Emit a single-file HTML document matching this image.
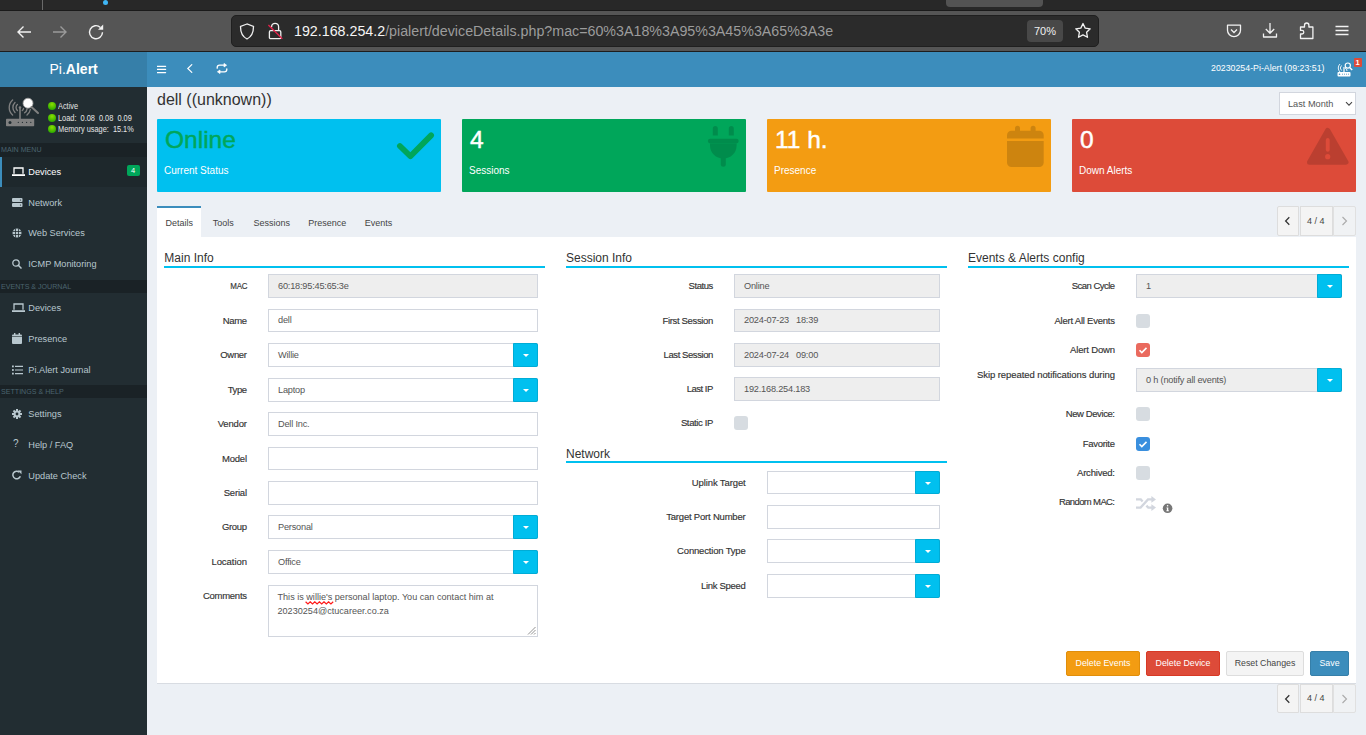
<!DOCTYPE html>
<html><head><meta charset="utf-8">
<style>
*{box-sizing:border-box;margin:0;padding:0}
html,body{width:1366px;height:735px;overflow:hidden}
body{position:relative;font-family:"Liberation Sans",sans-serif;background:#ecf0f5;color:#333}
.a{position:absolute}
.t{position:absolute;white-space:nowrap;line-height:1}
/* browser chrome */
#tabs{left:0;top:0;width:1366px;height:10px;background:#282828}
#tbline{left:0;top:10px;width:1366px;height:1px;background:#1a1a1a}
#toolbar{left:0;top:11px;width:1366px;height:40px;background:#555555}
#tbline2{left:0;top:51px;width:1366px;height:1px;background:#1d1d1d}
#url{left:231px;top:15px;width:868px;height:32px;background:#2b2b2b;border:1px solid #1f1f1f;border-radius:5px}
/* header */
#logo{left:0;top:52px;width:147px;height:35px;background:#367fa9}
#navbar{left:147px;top:52px;width:1219px;height:35px;background:#3c8dbc}
/* sidebar */
#sidebar{left:0;top:87px;width:147px;height:648px;background:#222d32}
.shdr{position:absolute;left:0;width:147px;background:#1a2226;color:#4b646f;font-size:7.6px;line-height:1}
.sitem{position:absolute;left:0;width:147px;color:#b8c7ce;font-size:9.4px}
/* info boxes */
.ibox{position:absolute;top:119px;width:284px;height:73px;border-radius:1px;color:#fff}
.ibox .num{position:absolute;left:8px;top:9.4px;font-size:24.5px;-webkit-text-stroke:0.45px currentColor;line-height:1;white-space:nowrap}
.ibox .lbl{position:absolute;left:7px;top:46.7px;font-size:10px;line-height:1;white-space:nowrap}
/* forms */
.lab{position:absolute;font-size:9.5px;letter-spacing:-0.25px;-webkit-text-stroke:0.15px #333;line-height:1;color:#333;text-align:right;white-space:nowrap}
.inp{position:absolute;height:24px;border:1px solid #d2d6de;background:#fff;color:#555;font-size:9.2px;letter-spacing:-0.2px;line-height:22px;padding-left:9px;white-space:nowrap}
.inp.ro{background:#eeeeee}
.dd{position:absolute;width:25px;height:24px;background:#00c0ef;border:1px solid #00acd6;border-radius:0 2px 2px 0}
.dd:after{content:"";position:absolute;left:8.7px;top:9.5px;border-left:3.3px solid transparent;border-right:3.3px solid transparent;border-top:3.6px solid #fff}
.sec{position:absolute;font-size:12px;line-height:1;color:#333;white-space:nowrap}
.secline{position:absolute;height:2px;background:#00c0ef}
.cb{position:absolute;width:14px;height:14px;border-radius:3px;background:#d7dce1}
.btn{position:absolute;top:651px;height:25px;border-radius:2px;font-size:8.8px;line-height:23px;text-align:center;color:#fff;white-space:nowrap}
</style></head><body>
<!-- browser chrome -->
<div id="tabs" class="a"></div>
<div id="tbline" class="a"></div>
<div id="toolbar" class="a"></div>
<div id="tbline2" class="a"></div>
<div id="url" class="a"></div>
<div class="a" style="left:42px;top:0;width:1px;height:10px;background:#6a6a6a"></div>
<div class="a" style="left:103px;top:0;width:5px;height:5px;border-radius:50%;background:#3fb6f5"></div>
<div class="a" style="left:946px;top:-4px;width:97px;height:11px;border-radius:4px;background:#535353"></div>
<!-- back -->
<svg class="a" style="left:16px;top:24px" width="16" height="16" viewBox="0 0 16 16"><path d="M15 8H2M7.5 2.5L2 8l5.5 5.5" fill="none" stroke="#f2f2f2" stroke-width="1.4"/></svg>
<svg class="a" style="left:52px;top:24px" width="16" height="16" viewBox="0 0 16 16"><path d="M1 8h13M8.5 2.5L14 8l-5.5 5.5" fill="none" stroke="#9a9a9a" stroke-width="1.4"/></svg>
<svg class="a" style="left:88px;top:24px" width="17" height="17" viewBox="0 0 17 17"><path d="M12.4 3.4A6.5 6.5 0 1 0 14.5 8.3" fill="none" stroke="#f2f2f2" stroke-width="1.4"/><path d="M10 5.8H15.2V0.6z" fill="#f2f2f2"/></svg>
<!-- shield -->
<svg class="a" style="left:239px;top:23px" width="16" height="17" viewBox="0 0 16 17"><path d="M8 1L1.5 3.5C1.5 10 4 14 8 16 12 14 14.5 10 14.5 3.5z" fill="none" stroke="#f0f0f0" stroke-width="1.3"/></svg>
<!-- lock -->
<svg class="a" style="left:267px;top:22px" width="16" height="18" viewBox="0 0 16 18"><rect x="2.4" y="8.6" width="11.4" height="8.1" rx="1.3" fill="none" stroke="#f0f0f0" stroke-width="1.3"/><path d="M4.6 5.2V4.8A3.5 3.5 0 0 1 11.6 4.8V8.6" fill="none" stroke="#f0f0f0" stroke-width="1.3"/><path d="M1.4 3L15.3 16.8" stroke="#e2224a" stroke-width="1.4"/></svg>
<div class="t" style="left:294px;top:23.9px;font-size:14.25px;color:#9c9c9c"><span style="color:#f5f5f5">192.168.254.2</span>/pialert/deviceDetails.php?mac=60%3A18%3A95%3A45%3A65%3A3e</div>
<div class="a" style="left:1027px;top:20px;width:36px;height:22px;border-radius:4px;background:#484848"></div>
<div class="t" style="left:1034px;top:25.6px;font-size:11px;color:#f0f0f0">70%</div>
<svg class="a" style="left:1074px;top:22px" width="18" height="18" viewBox="0 0 18 18"><path d="M9 1.5l2.2 4.6 5 .7-3.6 3.5.9 5L9 12.9l-4.5 2.4.9-5L1.8 6.8l5-.7z" fill="none" stroke="#f2f2f2" stroke-width="1.3" stroke-linejoin="round"/></svg>
<!-- pocket -->
<svg class="a" style="left:1226px;top:24px" width="16" height="14" viewBox="0 0 16 14"><path d="M1.5 1.2h13v5a6.5 6.5 0 0 1-13 0z" fill="none" stroke="#f2f2f2" stroke-width="1.3" stroke-linejoin="round"/><path d="M5 5.5l3 3 3-3" fill="none" stroke="#f2f2f2" stroke-width="1.3"/></svg>
<!-- download -->
<svg class="a" style="left:1262px;top:22px" width="16" height="17" viewBox="0 0 16 17"><path d="M8 1v10M3.8 7L8 11.2 12.2 7M1.5 11.5v3.5h13v-3.5" fill="none" stroke="#f2f2f2" stroke-width="1.3" stroke-linejoin="round"/></svg>
<!-- extensions -->
<svg class="a" style="left:1299px;top:22px" width="16" height="18" viewBox="0 0 16 18"><path d="M1.5 16.5V12h1.5a1.8 1.8 0 0 0 0-3.6H1.5V5h4V3.2a2.2 2.2 0 0 1 4.4 0V5h4v11.5z" fill="none" stroke="#f2f2f2" stroke-width="1.3" stroke-linejoin="round"/></svg>
<!-- menu -->
<svg class="a" style="left:1335px;top:24px" width="14" height="13" viewBox="0 0 14 13"><path d="M0.5 2.5h13M0.5 6.5h13M0.5 10.5h13" stroke="#f2f2f2" stroke-width="1.3"/></svg>


<!-- header -->
<div id="logo" class="a"></div>
<div id="navbar" class="a"></div>
<div class="t" style="left:49.5px;top:62.2px;font-size:14px;color:#fff"><span>Pi.</span><b>Alert</b></div>
<svg class="a" style="left:157px;top:65px" width="10" height="9" viewBox="0 0 10 9"><path d="M0 1.3h8.6M0 4.4h8.6M0 7.5h8.6" stroke="#fff" stroke-width="1.25" stroke-linecap="round"/></svg>
<svg class="a" style="left:186px;top:63px" width="8" height="11" viewBox="0 0 8 11"><path d="M5.8 1.6L1.8 5.5 5.8 9.4" fill="none" stroke="#fff" stroke-width="1.2" stroke-linecap="round"/></svg>
<svg class="a" style="left:216px;top:63px" width="12" height="11" viewBox="0 0 12 11"><g fill="none" stroke="#fff" stroke-width="1.3" stroke-linecap="round"><path d="M1.2 5.2V4.6Q1.2 2.2 3.6 2.2H8.4"/><path d="M10.8 5.8V6.4Q10.8 8.8 8.4 8.8H3.6"/></g><g fill="#fff" stroke="#fff" stroke-width="0.7" stroke-linejoin="round"><path d="M8 0.4L10.6 2.2 8 4z"/><path d="M4 7L1.4 8.8 4 10.6z"/></g></svg>
<div class="t" style="left:1211px;top:64px;font-size:8.8px;color:#fff">20230254-Pi-Alert (09:23:51)</div>
<svg class="a" style="left:1337px;top:62px" width="16" height="15" viewBox="0 0 16 15"><rect x="0.5" y="10" width="13" height="4.5" rx="1" fill="#fff"/><circle cx="2.5" cy="12.2" r="0.8" fill="#3c8dbc"/><path d="M5 12.2h7" stroke="#3c8dbc" stroke-width="0.8" stroke-dasharray="1 1"/><path d="M7 10V5" stroke="#fff" stroke-width="1.2"/><path d="M4.5 3.5a3.5 3.5 0 0 0 0 5M3 2a5.5 5.5 0 0 0 0 8" fill="none" stroke="#fff" stroke-width="0.9"/><circle cx="10.8" cy="3.6" r="2.6" fill="none" stroke="#fff" stroke-width="1.2"/><path d="M12.6 5.4l2.6 2.6" stroke="#fff" stroke-width="1.4"/><path d="M8 6a3 3 0 0 1 2 3M9.2 5.3" fill="none" stroke="#fff" stroke-width="0.9"/></svg>
<div class="a" style="left:1354px;top:58px;width:8px;height:9px;background:#dd4b39;border-radius:1px"></div>
<div class="t" style="left:1355.5px;top:59.2px;font-size:7.5px;font-weight:bold;color:#fff">1</div>


<!-- sidebar -->
<div id="sidebar" class="a"></div>
<svg class="a" style="left:5px;top:97px" width="36" height="31" viewBox="0 0 36 31"><g fill="#808080" stroke="none"><rect x="1" y="21.8" width="28.2" height="7.5" rx="0.8"/></g><g fill="#222d32"><circle cx="5" cy="25.4" r="1.5"/><circle cx="13.3" cy="25.4" r="0.6"/><circle cx="17.4" cy="25.4" r="0.6"/><circle cx="21.6" cy="25.4" r="0.6"/><circle cx="25.8" cy="25.4" r="0.6"/></g><path d="M15 22V10.5" stroke="#808080" stroke-width="1.6"/><circle cx="15" cy="10.5" r="1.3" fill="#808080"/><g fill="none" stroke="#808080" stroke-width="1.35" stroke-linecap="round"><path d="M12.4 7.5a4 4 0 0 0 0 6"/><path d="M10 5.5a7 7 0 0 0 0 10"/><path d="M7.6 3a10 10 0 0 0 0 15"/><path d="M17.3 13.5a3 3 0 0 0 1.2-2"/><path d="M19.6 15.8a6 6 0 0 0 2.5-4"/><path d="M22 18a9 9 0 0 0 3.3-5.5"/></g><circle cx="23" cy="6.2" r="5" fill="#fff" stroke="#999" stroke-width="0.8"/><path d="M26.5 10l6.5 6" stroke="#808080" stroke-width="2" stroke-linecap="round"/></svg>
<div class="a" style="left:48px;top:102px;width:8px;height:8px;border-radius:50%;background:radial-gradient(circle at 50% 30%,#8be000,#2aa800 80%)"></div>
<div class="a" style="left:48px;top:114px;width:8px;height:8px;border-radius:50%;background:radial-gradient(circle at 50% 30%,#8be000,#2aa800 80%)"></div>
<div class="a" style="left:48px;top:125px;width:8px;height:8px;border-radius:50%;background:radial-gradient(circle at 50% 30%,#8be000,#2aa800 80%)"></div>
<div class="t" style="left:58px;top:103.3px;font-size:8.2px;color:#e6e6e6;transform:scaleX(0.9);transform-origin:0 0">Active</div>
<div class="t" style="left:58px;top:115.0px;font-size:8.2px;color:#e6e6e6;transform:scaleX(0.9);transform-origin:0 0">Load:&nbsp; 0.08&nbsp; 0.08&nbsp; 0.09</div>
<div class="t" style="left:58px;top:126.1px;font-size:8.2px;color:#e6e6e6;transform:scaleX(0.9);transform-origin:0 0">Memory usage:&nbsp; 15.1%</div>
<div class="a" style="left:0;top:143px;width:147px;height:14px;background:#1a2226"></div>
<div class="t" style="left:1px;top:147px;font-size:7.1px;color:#4b646f">MAIN MENU</div>
<div class="a" style="left:0;top:280px;width:147px;height:13px;background:#1a2226"></div>
<div class="t" style="left:1px;top:283.5px;font-size:7.1px;color:#4b646f">EVENTS &amp; JOURNAL</div>
<div class="a" style="left:0;top:385px;width:147px;height:13px;background:#1a2226"></div>
<div class="t" style="left:1px;top:388.5px;font-size:7.1px;color:#4b646f">SETTINGS &amp; HELP</div>
<div class="a" style="left:0;top:157px;width:147px;height:30px;background:#1e282c"></div>
<div class="a" style="left:0;top:157px;width:2px;height:30px;background:#3c8dbc"></div>
<div class="a" style="left:127px;top:165px;width:13px;height:11px;border-radius:2px;background:#00a65a"></div>
<div class="t" style="left:131px;top:167px;font-size:7.5px;color:#fff">4</div>
<svg class="a" style="left:12px;top:167px" width="13" height="9" viewBox="0 0 13 9"><path d="M2 6.8V1h9v5.8" fill="none" stroke="#fff" stroke-width="1.3"/><path d="M0 7.2h13v1.8H0z" fill="#fff"/></svg>
<div class="t" style="left:28.3px;top:168.0px;font-size:9.2px;color:#fff">Devices</div>
<svg class="a" style="left:12px;top:198px" width="11" height="9" viewBox="0 0 11 9"><rect x="0" y="0" width="10.5" height="4" rx="1" fill="#b8c7ce"/><rect x="0" y="5" width="10.5" height="4" rx="1" fill="#b8c7ce"/><circle cx="8.5" cy="2" r="0.6" fill="#222d32"/><circle cx="8.5" cy="7" r="0.6" fill="#222d32"/></svg>
<div class="t" style="left:28.3px;top:199.0px;font-size:9.2px;color:#b8c7ce">Network</div>
<svg class="a" style="left:12px;top:227.5px" width="10" height="10" viewBox="0 0 10 10"><circle cx="5" cy="5" r="4.5" fill="#b8c7ce"/><path d="M0.5 3.5h9M0.5 6.5h9M3.5 0.5v9M6.5 0.5v9" stroke="#222d32" stroke-width="0.8"/></svg>
<div class="t" style="left:28.3px;top:229.2px;font-size:9.2px;color:#b8c7ce">Web Services</div>
<svg class="a" style="left:12px;top:258.5px" width="10" height="10" viewBox="0 0 10 10"><circle cx="4" cy="4" r="3.2" fill="none" stroke="#b8c7ce" stroke-width="1.3"/><path d="M6.3 6.3L9.5 9.5" stroke="#b8c7ce" stroke-width="1.5"/></svg>
<div class="t" style="left:28.3px;top:260.2px;font-size:9.2px;color:#b8c7ce">ICMP Monitoring</div>
<svg class="a" style="left:12px;top:303px" width="13" height="9" viewBox="0 0 13 9"><path d="M2 6.8V1h9v5.8" fill="none" stroke="#b8c7ce" stroke-width="1.3"/><path d="M0 7.2h13v1.8H0z" fill="#b8c7ce"/></svg>
<div class="t" style="left:28.3px;top:304.2px;font-size:9.2px;color:#b8c7ce">Devices</div>
<svg class="a" style="left:12px;top:333px" width="10" height="11" viewBox="0 0 10 11"><rect x="2" y="0" width="1.4" height="2.5" fill="#b8c7ce"/><rect x="6.6" y="0" width="1.4" height="2.5" fill="#b8c7ce"/><rect x="0" y="1.5" width="10" height="9.5" rx="1" fill="#b8c7ce"/><rect x="0" y="3.2" width="10" height="0.6" fill="#222d32"/></svg>
<div class="t" style="left:28.3px;top:335.4px;font-size:9.2px;color:#b8c7ce">Presence</div>
<svg class="a" style="left:12px;top:364.5px" width="11" height="10" viewBox="0 0 11 10"><rect x="0" y="0.5" width="1.8" height="1.8" fill="#b8c7ce"/><rect x="0" y="4.1" width="1.8" height="1.8" fill="#b8c7ce"/><rect x="0" y="7.7" width="1.8" height="1.8" fill="#b8c7ce"/><path d="M3 1.4h8M3 5h8M3 8.6h8" stroke="#b8c7ce" stroke-width="1.1"/></svg>
<div class="t" style="left:28.3px;top:366.2px;font-size:9.2px;color:#b8c7ce">Pi.Alert Journal</div>
<svg class="a" style="left:12px;top:408.5px" width="10" height="10" viewBox="0 0 10 10"><g fill="#b8c7ce"><circle cx="5" cy="5" r="3.4"/><rect x="4" y="0" width="2" height="10"/><rect x="0" y="4" width="10" height="2"/><rect x="4" y="0" width="2" height="10" transform="rotate(45 5 5)"/><rect x="4" y="0" width="2" height="10" transform="rotate(-45 5 5)"/></g><circle cx="5" cy="5" r="1.4" fill="#222d32"/></svg>
<div class="t" style="left:28.3px;top:410.2px;font-size:9.2px;color:#b8c7ce">Settings</div>
<div class="t" style="left:13px;top:439px;font-size:10px;color:#b8c7ce">?</div>
<div class="t" style="left:28.3px;top:440.5px;font-size:9.2px;color:#b8c7ce">Help / FAQ</div>
<svg class="a" style="left:12px;top:469.5px" width="10" height="10" viewBox="0 0 10 10"><path d="M8.3 6.2A3.8 3.8 0 1 1 7.3 2.2" fill="none" stroke="#b8c7ce" stroke-width="1.5"/><path d="M5.8 0.5H9.5V4.2z" fill="#b8c7ce"/></svg>
<div class="t" style="left:28.3px;top:471.6px;font-size:9.2px;color:#b8c7ce">Update Check</div>

<!-- content -->
<div class="a" style="left:157px;top:206px;width:44px;height:31px;background:#fff"></div>
<div class="a" style="left:157px;top:206px;width:44px;height:2px;background:#3c8dbc"></div>
<div class="t" style="left:165.5px;top:218.6px;font-size:9px;color:#444">Details</div>
<div class="t" style="left:212.8px;top:218.6px;font-size:9px;color:#444">Tools</div>
<div class="t" style="left:253.5px;top:218.6px;font-size:9px;color:#444">Sessions</div>
<div class="t" style="left:308.2px;top:218.6px;font-size:9px;color:#444">Presence</div>
<div class="t" style="left:364.8px;top:218.6px;font-size:9px;color:#444">Events</div>
<div class="a" style="left:1277px;top:206px;width:22px;height:30px;background:#f4f4f4;border:1px solid #ddd;border-radius:2px 0 0 2px"></div>
<div class="a" style="left:1300px;top:206px;width:33px;height:30px;background:#f4f4f4;border:1px solid #ddd"></div>
<div class="a" style="left:1333px;top:206px;width:23px;height:30px;background:#f0f2f4;border:1px solid #e0e0e0;border-radius:0 2px 2px 0"></div>
<svg class="a" style="left:1284px;top:216.0px" width="7" height="10" viewBox="0 0 7 10"><path d="M5.3 1.2L1.6 5l3.7 3.8" fill="none" stroke="#333" stroke-width="1.25"/></svg>
<svg class="a" style="left:1341px;top:216.0px" width="7" height="10" viewBox="0 0 7 10"><path d="M1.5 1l4 4-4 4" fill="none" stroke="#aaa" stroke-width="1.1"/></svg>
<div class="t" style="left:1307px;top:216.9px;font-size:9px;color:#444">4 / 4</div>
<div class="a" style="left:157px;top:237px;width:1199px;height:447px;background:#fff;border-bottom:1px solid #d8dce2"></div>
<div class="a" style="left:1277px;top:684px;width:22px;height:29px;background:#f4f4f4;border:1px solid #ddd;border-radius:2px 0 0 2px"></div>
<div class="a" style="left:1300px;top:684px;width:33px;height:29px;background:#f4f4f4;border:1px solid #ddd"></div>
<div class="a" style="left:1333px;top:684px;width:23px;height:29px;background:#f0f2f4;border:1px solid #e0e0e0;border-radius:0 2px 2px 0"></div>
<svg class="a" style="left:1284px;top:693.5px" width="7" height="10" viewBox="0 0 7 10"><path d="M5.3 1.2L1.6 5l3.7 3.8" fill="none" stroke="#333" stroke-width="1.25"/></svg>
<svg class="a" style="left:1341px;top:693.5px" width="7" height="10" viewBox="0 0 7 10"><path d="M1.5 1l4 4-4 4" fill="none" stroke="#aaa" stroke-width="1.1"/></svg>
<div class="t" style="left:1307px;top:694.4px;font-size:9px;color:#444">4 / 4</div>
<div class="t" style="left:157px;top:91.5px;font-size:16px;color:#333">dell ((unknown))</div>
<div class="a" style="left:1279px;top:92px;width:77px;height:23px;background:#fff;border:1px solid #d2d6de"></div>
<div class="t" style="left:1288px;top:100.2px;font-size:9.2px;color:#555">Last Month</div>
<svg class="a" style="left:1344.5px;top:101px" width="8" height="6" viewBox="0 0 8 6"><path d="M1 1.2l3 3 3-3" fill="none" stroke="#444" stroke-width="1.05"/></svg>
<div class="ibox" style="left:157px;background:#00c0ef"><div class="num" style="color:#00a65a">Online</div><div class="lbl">Current Status</div></div>
<div class="ibox" style="left:462px;background:#00a65a"><div class="num" style="color:#fff">4</div><div class="lbl">Sessions</div></div>
<div class="ibox" style="left:767px;background:#f39c12"><div class="num" style="color:#fff">11 h.</div><div class="lbl">Presence</div></div>
<div class="ibox" style="left:1072px;background:#dd4b39"><div class="num" style="color:#fff">0</div><div class="lbl">Down Alerts</div></div>
<svg class="a" style="left:395px;top:128px" width="42" height="36" viewBox="0 0 42 36"><path d="M4.9 18L15.4 28.3 36.1 7.4" fill="none" stroke="#00a65a" stroke-width="5.8" stroke-linecap="round" stroke-linejoin="round"/></svg>
<svg class="a" style="left:706px;top:125px" width="34" height="43" viewBox="0 0 34 43"><g fill="#000" opacity="0.15"><path d="M6.8 10.4V3.4a2.5 2.5 0 0 1 5 0V10.4zM22.8 10.4V3.4a2.5 2.5 0 0 1 5 0V10.4z"/><path d="M4.2 13.8H30.4a2.3 2.3 0 0 1 0 4.6H4.2a2.3 2.3 0 0 1 0-4.6z"/><path d="M4 18.4H30.6V20.5C30.6 28 24.6 33.6 17.3 33.6C10 33.6 4 28 4 20.5Z"/><path d="M14.8 33V39.3a2.5 2.5 0 0 0 5 0V33z"/></g></svg>
<svg class="a" style="left:1007px;top:125px" width="37" height="43" viewBox="0 0 37 43"><g fill="#000" opacity="0.15"><path d="M8 8V3.2a2.5 2.5 0 0 1 5 0V8zM23.6 8V3.2a2.5 2.5 0 0 1 5 0V8z"/><path d="M4.5 5.8H32.2a4.5 4.5 0 0 1 4.5 4.5V13.6H0V10.3A4.5 4.5 0 0 1 4.5 5.8z"/><path d="M0 16.1H36.7V37.5a4.5 4.5 0 0 1-4.5 4.5H4.5A4.5 4.5 0 0 1 0 37.5z"/></g></svg>
<svg class="a" style="left:1306px;top:127px" width="44" height="40" viewBox="0 0 44 40"><g opacity="0.15"><path d="M21.7 3.3L40 35.2H3.5z" fill="#000" stroke="#000" stroke-width="5" stroke-linejoin="round"/></g><g fill="#dd4b39"><rect x="19.8" y="11" width="3.9" height="13.7" rx="1.95"/><circle cx="21.7" cy="29.7" r="2.6"/></g></svg>
<div class="sec" style="left:164.3px;top:251.5px">Main Info</div>
<div class="secline" style="left:164.3px;top:266px;width:381px"></div>
<div class="sec" style="left:566px;top:251.5px">Session Info</div>
<div class="secline" style="left:566px;top:266px;width:381px"></div>
<div class="sec" style="left:968px;top:251.5px">Events &amp; Alerts config</div>
<div class="secline" style="left:968px;top:266px;width:381px"></div>
<div class="sec" style="left:566px;top:447.7px">Network</div>
<div class="secline" style="left:566px;top:461px;width:381px"></div>
<div class="lab" style="right:1119px;top:281.4px;transform:scaleX(0.84);transform-origin:100% 0">MAC</div>
<div class="inp ro" style="left:268px;top:274px;width:270px;height:24px;line-height:22px">60:18:95:45:65:3e</div>
<div class="lab" style="right:1119.35px;top:315.9px;letter-spacing:-0.347px">Name</div>
<div class="inp" style="left:268px;top:309px;width:270px;height:23px;line-height:21px">dell</div>
<div class="lab" style="right:1119.32px;top:350.4px;letter-spacing:-0.320px">Owner</div>
<div class="inp" style="left:268px;top:343px;width:270px;height:24px;line-height:22px">Willie</div>
<div class="dd" style="left:513px;top:343px;height:24px"></div>
<div class="lab" style="right:1119.47px;top:385.4px;letter-spacing:-0.465px">Type</div>
<div class="inp" style="left:268px;top:378px;width:270px;height:24px;line-height:22px">Laptop</div>
<div class="dd" style="left:513px;top:378px;height:24px"></div>
<div class="lab" style="right:1119.16px;top:419.4px;letter-spacing:-0.162px">Vendor</div>
<div class="inp" style="left:268px;top:412px;width:270px;height:24px;line-height:22px">Dell Inc.</div>
<div class="lab" style="right:1119.22px;top:453.9px;letter-spacing:-0.219px">Model</div>
<div class="inp" style="left:268px;top:447px;width:270px;height:23px;line-height:21px"></div>
<div class="lab" style="right:1119.20px;top:488.4px;letter-spacing:-0.198px">Serial</div>
<div class="inp" style="left:268px;top:481px;width:270px;height:24px;line-height:22px"></div>
<div class="lab" style="right:1119.35px;top:522.4px;letter-spacing:-0.351px">Group</div>
<div class="inp" style="left:268px;top:515px;width:270px;height:24px;line-height:22px">Personal</div>
<div class="dd" style="left:513px;top:515px;height:24px"></div>
<div class="lab" style="right:1119.05px;top:557.4px;letter-spacing:-0.045px">Location</div>
<div class="inp" style="left:268px;top:550px;width:270px;height:24px;line-height:22px">Office</div>
<div class="dd" style="left:513px;top:550px;height:24px"></div>
<div class="lab" style="right:1119.26px;top:591.4px;letter-spacing:-0.261px">Comments</div>
<div class="a" style="left:268px;top:585px;width:270px;height:52px;border:1px solid #d2d6de;background:#fff"></div>
<div class="t" style="left:277.5px;top:593.2px;font-size:9.1px;color:#555">This is willie's personal laptop. You can contact him at</div>
<svg class="a" style="left:305px;top:600.6px" width="29" height="4" viewBox="0 0 29 4"><path d="M0.6 0.8 L2.9 3.0 L5.2 0.8 L7.5 3.0 L9.8 0.8 L12.1 3.0 L14.4 0.8 L16.7 3.0 L19.0 0.8 L21.3 3.0 L23.6 0.8 L25.9 3.0 L28.2 0.8" fill="none" stroke="#ff1a1a" stroke-width="1.2"/></svg>
<div class="t" style="left:277.5px;top:607.2px;font-size:9.1px;color:#555">20230254@ctucareer.co.za</div>
<svg class="a" style="left:527px;top:626px" width="9" height="9" viewBox="0 0 9 9"><path d="M8.5 1L1 8.5M8.5 4L4 8.5M8.5 7L7 8.5" stroke="#777" stroke-width="0.8"/></svg>
<div class="lab" style="right:653.15px;top:281.4px;letter-spacing:-0.446px">Status</div>
<div class="inp ro" style="left:734px;top:274px;width:206px;height:24px;line-height:22px">Online</div>
<div class="lab" style="right:653.03px;top:315.9px;letter-spacing:-0.334px">First Session</div>
<div class="inp ro" style="left:734px;top:309px;width:206px;height:23px;line-height:21px">2024-07-23&nbsp;&nbsp; 18:39</div>
<div class="lab" style="right:653.13px;top:350.4px;letter-spacing:-0.427px">Last Session</div>
<div class="inp ro" style="left:734px;top:343px;width:206px;height:24px;line-height:22px">2024-07-24&nbsp;&nbsp; 09:00</div>
<div class="lab" style="right:653.20px;top:384.4px;letter-spacing:-0.495px">Last IP</div>
<div class="inp ro" style="left:734px;top:377px;width:206px;height:24px;line-height:22px">192.168.254.183</div>
<div class="lab" style="right:653.07px;top:418.4px;letter-spacing:-0.372px">Static IP</div>
<div class="cb" style="left:734px;top:416px"></div>
<div class="lab" style="right:620.41px;top:477.9px;letter-spacing:-0.114px">Uplink Target</div>
<div class="inp" style="left:767px;top:471px;width:173px;height:23px;line-height:21px"></div>
<div class="dd" style="left:915px;top:471px;height:23px"></div>
<div class="lab" style="right:620.50px;top:512.4px;letter-spacing:-0.200px">Target Port Number</div>
<div class="inp" style="left:767px;top:505px;width:173px;height:24px;line-height:22px"></div>
<div class="lab" style="right:620.48px;top:546.4px;letter-spacing:-0.180px">Connection Type</div>
<div class="inp" style="left:767px;top:539px;width:173px;height:24px;line-height:22px"></div>
<div class="dd" style="left:915px;top:539px;height:24px"></div>
<div class="lab" style="right:620.62px;top:581.4px;letter-spacing:-0.315px">Link Speed</div>
<div class="inp" style="left:767px;top:574px;width:173px;height:24px;line-height:22px"></div>
<div class="dd" style="left:915px;top:574px;height:24px"></div>
<div class="lab" style="right:251.54px;top:281.4px;letter-spacing:-0.539px">Scan Cycle</div>
<div class="inp ro" style="left:1136px;top:274px;width:206px;height:24px;line-height:22px">1</div>
<div class="dd" style="left:1317px;top:274px;height:24px"></div>
<div class="lab" style="right:251.23px;top:316.4px;letter-spacing:-0.226px">Alert All Events</div>
<div class="cb" style="left:1136px;top:314px"></div>
<div class="lab" style="right:251.17px;top:345.4px;letter-spacing:-0.173px">Alert Down</div>
<div class="cb" style="left:1136px;top:343px;background:#ea6a5e"></div>
<svg class="a" style="left:1136px;top:343px" width="14" height="14" viewBox="0 0 14 14"><path d="M3.5 7.3l2.3 2.3 4.7-4.7" fill="none" stroke="#fff" stroke-width="1.6"/></svg>
<div class="lab" style="right:251.08px;top:370.4px;letter-spacing:-0.075px">Skip repeated notifications during</div>
<div class="inp ro" style="left:1136px;top:368px;width:206px;height:24px;line-height:22px">0 h (notify all events)</div>
<div class="dd" style="left:1317px;top:368px;height:24px"></div>
<div class="lab" style="right:251.40px;top:409.4px;letter-spacing:-0.402px">New Device:</div>
<div class="cb" style="left:1136px;top:407px"></div>
<div class="lab" style="right:251.29px;top:439.4px;letter-spacing:-0.288px">Favorite</div>
<div class="cb" style="left:1136px;top:437px;background:#3a8fde"></div>
<svg class="a" style="left:1136px;top:437px" width="14" height="14" viewBox="0 0 14 14"><path d="M3.5 7.3l2.3 2.3 4.7-4.7" fill="none" stroke="#fff" stroke-width="1.6"/></svg>
<div class="lab" style="right:251.20px;top:468.4px;letter-spacing:-0.200px">Archived:</div>
<div class="cb" style="left:1136px;top:466px"></div>
<div class="lab" style="right:251.62px;top:497.4px;letter-spacing:-0.620px">Random MAC:</div>
<svg class="a" style="left:1136px;top:495px" width="21" height="17" viewBox="0 0 21 17"><g fill="none" stroke="#d2d6de" stroke-width="2.3"><path d="M0 4.4H4.8L6.6 6.4"/><path d="M0 12.6H4.6L12 4.4H16.2"/><path d="M10.4 10.6L12.3 12.6H16.2"/></g><g fill="#d2d6de"><path d="M15.4 1L20 4.4L15.4 7.8z"/><path d="M15.4 9.2L20 12.6L15.4 16z"/></g></svg>
<svg class="a" style="left:1162px;top:503px" width="11" height="11" viewBox="0 0 11 11"><circle cx="5.6" cy="5.3" r="4.8" fill="#777"/><g fill="#fff"><circle cx="5.6" cy="2.7" r="0.8"/><path d="M4.5 4.5H6.3V7.2H6.8V8.2H4.4V7.2H4.9V5.3H4.5z"/></g></svg>
<div class="btn" style="left:1066px;width:74px;background:#f39c12;border:1px solid #e08e0b;color:#fff">Delete Events</div>
<div class="btn" style="left:1146px;width:74px;background:#dd4b39;border:1px solid #d73925;color:#fff">Delete Device</div>
<div class="btn" style="left:1226px;width:78px;background:#f4f4f4;border:1px solid #ddd;color:#444">Reset Changes</div>
<div class="btn" style="left:1310px;width:39px;background:#3c8dbc;border:1px solid #367fa9;color:#fff">Save</div>
</body></html>
